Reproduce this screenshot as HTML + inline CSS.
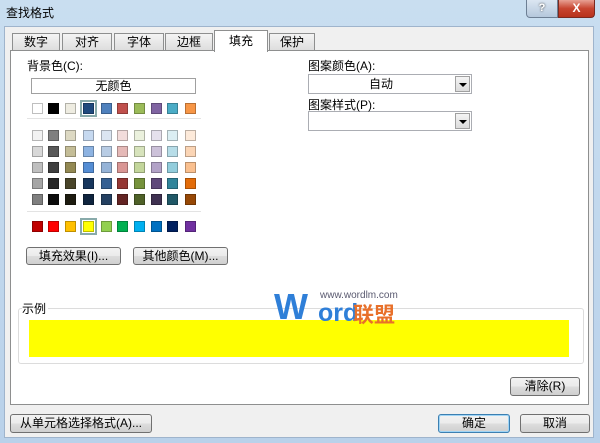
<!DOCTYPE html>
<html><head><meta charset="utf-8"><style>
*{margin:0;padding:0;box-sizing:border-box}
body{width:600px;height:443px;overflow:hidden;position:relative;font-family:"Liberation Sans","Noto Sans CJK SC",sans-serif;font-size:12px;color:#000;background:linear-gradient(#c9def0,#b9d1ea)}
.a{position:absolute}
.title{left:6px;top:4px;font-size:12px;color:#000}
.inner{left:4px;top:26px;width:590px;height:412px;background:#f0f0f0;border:1px solid #9fb4cc}
.tab{position:absolute;top:33px;height:18px;background:linear-gradient(#f4f4f4,#dcdcdc);border:1px solid #8e8f8f;border-bottom:none;text-align:center;line-height:17px;font-size:12px}
.tab.sel{top:30px;height:22px;background:#fff;z-index:3;line-height:20px}
.panel{left:10px;top:50px;width:579px;height:355px;background:#fff;border:1px solid #8e8f8f;z-index:2}
.sw{position:absolute;width:11px;height:11px;border:1px solid rgba(0,0,0,.25);z-index:4}
.btn{position:absolute;border:1px solid #707070;border-radius:3px;background:linear-gradient(#f2f2f2 0%,#ebebeb 50%,#dddddd 51%,#cfcfcf 100%);text-align:center;font-size:12px;z-index:4}
.combo{position:absolute;border:1px solid #abadb3;background:#fff;z-index:4}
.arr{position:absolute;right:1px;top:1px;width:15px;bottom:1px;border:1px solid #a0a0a0;background:linear-gradient(#f4f4f4,#dcdcdc)}
.arr:after{content:"";position:absolute;left:3px;top:6px;border-left:4px solid transparent;border-right:4px solid transparent;border-top:4px solid #000}
.z{z-index:5}
</style></head><body>
<div class="a title">查找格式</div>
<div class="a" style="left:526px;top:0;width:32px;height:18px;border:1px solid #6d7f94;border-top:none;border-radius:0 0 0 4px;background:linear-gradient(#dbe6f2,#b5c8dc);text-align:center;font-size:11px;color:#fff;font-weight:bold;line-height:16px;text-shadow:0 0 2px #333">?</div>
<div class="a" style="left:558px;top:0;width:37px;height:18px;border:1px solid #7a2a20;border-top:none;border-radius:0 0 4px 0;background:linear-gradient(#e8a093,#c74530 50%,#b8321c);text-align:center;font-size:12px;color:#fff;font-weight:bold;line-height:16px">X</div>
<div class="a inner"></div>
<div class="tab" style="left:12px;width:48px">数字</div>
<div class="tab" style="left:62px;width:50px">对齐</div>
<div class="tab" style="left:114px;width:50px">字体</div>
<div class="tab" style="left:165px;width:48px">边框</div>
<div class="tab sel" style="left:214px;width:54px">填充</div>
<div class="tab" style="left:269px;width:46px">保护</div>
<div class="a panel"></div>
<div class="a z" style="left:27px;top:57px">背景色(C):</div>
<div class="a z" style="left:31px;top:78px;width:165px;height:16px;border:1px solid #a0a0a0;text-align:center;line-height:14px">无颜色</div>
<div class="a z" style="left:27px;top:118px;width:174px;height:1px;background:#e3e3e3"></div>
<div class="a z" style="left:27px;top:211px;width:174px;height:1px;background:#e3e3e3"></div>
<div id="sw"></div>
<div class="btn" style="left:26px;top:247px;width:95px;height:18px;line-height:16px">填充效果(I)...</div>
<div class="btn" style="left:133px;top:247px;width:95px;height:18px;line-height:16px">其他颜色(M)...</div>
<div class="a z" style="left:308px;top:57px">图案颜色(A):</div>
<div class="combo" style="left:308px;top:74px;width:164px;height:20px"><div style="position:absolute;left:0;right:18px;text-align:center;line-height:18px">自动</div><div class="arr"></div></div>
<div class="a z" style="left:308px;top:96px">图案样式(P):</div>
<div class="combo" style="left:308px;top:111px;width:164px;height:20px"><div class="arr"></div></div>
<div class="a z" style="left:18px;top:308px;width:566px;height:56px;border:1px solid #dcdcdc;border-radius:3px"></div>
<div class="a z" style="left:22px;top:300px;background:#fff;padding-right:2px">示例</div>
<div class="a z" style="left:29px;top:320px;width:540px;height:37px;background:#ffff00"></div>
<div class="a z" style="left:274px;top:288px;font-size:36px;font-weight:bold;color:#2f7fd8;letter-spacing:-2px;line-height:38px">W</div>
<div class="a z" style="left:318px;top:300px;font-size:25px;font-weight:bold;color:#2f7fd8;line-height:26px">ord</div>
<div class="a z" style="left:320px;top:290px;font-size:10px;color:#5a5a70">www.wordlm.com</div>
<div class="a z" style="left:353px;top:305px;font-size:21px;font-weight:bold;color:#e8702a;line-height:22px">联盟</div>
<div class="btn" style="left:510px;top:377px;width:70px;height:19px;line-height:17px">清除(R)</div>
<div class="btn" style="left:10px;top:414px;width:142px;height:19px;line-height:17px">从单元格选择格式(A)...</div>
<div class="btn" style="left:438px;top:414px;width:72px;height:19px;line-height:17px;border-color:#3c7fb1;box-shadow:inset 0 0 0 1px #9fd4f5">确定</div>
<div class="btn" style="left:520px;top:414px;width:70px;height:19px;line-height:17px">取消</div>
<script>
var xs=[32,48,65,83,101,117,134,151,167,185];
var top1=["#ffffff","#000000","#eeece1","#1f497d","#4f81bd","#c0504d","#9bbb59","#8064a2","#4bacc6","#f79646"];
var grid=[
["#f2f2f2","#7f7f7f","#ddd9c3","#c6d9f0","#dbe5f1","#f2dcdb","#ebf1dd","#e5e0ec","#dbeef3","#fdeada"],
["#d8d8d8","#595959","#c4bd97","#8db3e2","#b8cce4","#e5b9b7","#d7e3bc","#ccc1d9","#b7dde8","#fbd5b5"],
["#bfbfbf","#3f3f3f","#938953","#548dd4","#95b3d7","#d99694","#c3d69b","#b2a2c7","#92cddc","#fac08f"],
["#a5a5a5","#262626","#494429","#17365d","#366092","#953734","#76923c","#5f497a","#31859b","#e36c09"],
["#7f7f7f","#0c0c0c","#1d1b10","#0f243e","#244061","#632423","#4f6128","#3f3151","#205867","#974806"]];
var std=["#c00000","#ff0000","#ffc000","#ffff00","#92d050","#00b050","#00b0f0","#0070c0","#002060","#7030a0"];
var h="";
function add(x,y,c,sel){h+='<div class="sw" style="left:'+x+'px;top:'+y+'px;background:'+c+(sel?';outline:2px solid #8aa;outline-offset:1px':'')+'"></div>';}
xs.forEach(function(x,i){add(x,103,top1[i],i==3);});
grid.forEach(function(r,j){xs.forEach(function(x,i){add(x,130+j*16,r[i]);});});
xs.forEach(function(x,i){add(x,221,std[i],i==3);});
document.getElementById("sw").innerHTML=h;
</script>
</body></html>
